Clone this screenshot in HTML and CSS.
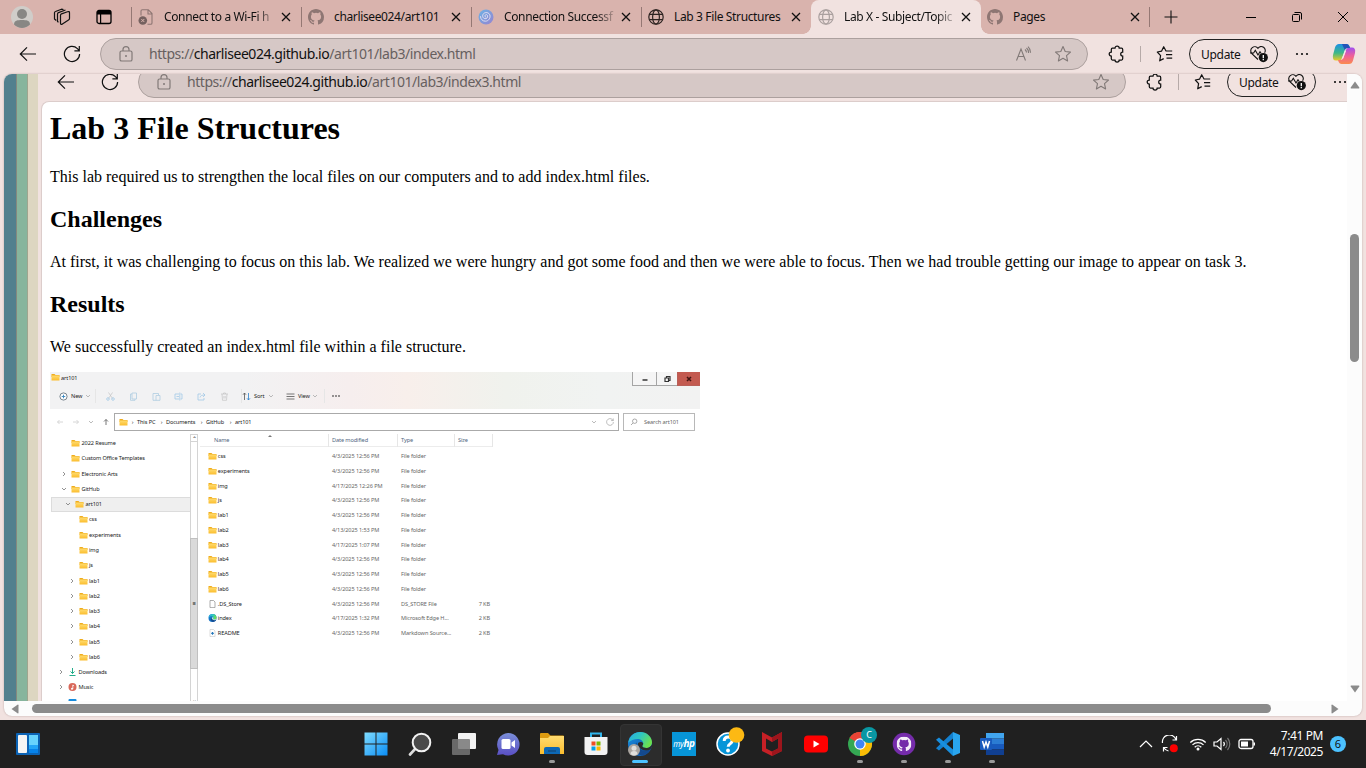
FILE: index.html
```html
<!DOCTYPE html>
<html lang="en">
<head>
<meta charset="utf-8">
<title>Lab X - Subject/Topic</title>
<link rel="stylesheet" href="styles.css">
</head>
<body>
<svg class="defs" aria-hidden="true">
  <defs>
    <linearGradient id="gFolder" x1="0" y1="0" x2="0" y2="1"><stop offset="0" stop-color="#ffdc70"/><stop offset="1" stop-color="#fbbd2e"/></linearGradient>
    <linearGradient id="gWin" x1="0" y1="0" x2="1" y2="1"><stop offset="0" stop-color="#7fdcff"/><stop offset="1" stop-color="#0a8df5"/></linearGradient>
    <linearGradient id="gEdgeA" x1="0" y1="0" x2="1" y2=".5"><stop offset="0" stop-color="#28a9e6"/><stop offset=".5" stop-color="#2fc7c0"/><stop offset="1" stop-color="#6be04f"/></linearGradient>
    <linearGradient id="gEdgeB" x1="0" y1="0" x2="1" y2="1"><stop offset="0" stop-color="#1a8fe0"/><stop offset="1" stop-color="#0c4fa5"/></linearGradient>
    <linearGradient id="gChat" x1="0" y1="0" x2="0" y2="1"><stop offset="0" stop-color="#7a8ed8"/><stop offset="1" stop-color="#5a4fc4"/></linearGradient>
    <linearGradient id="gCopA" x1="0" y1="0" x2="0" y2="1"><stop offset="0" stop-color="#1b8fe6"/><stop offset=".55" stop-color="#3fb886"/><stop offset="1" stop-color="#ecc928"/></linearGradient>
    <linearGradient id="gCopB" x1="0" y1="0" x2="0" y2="1"><stop offset="0" stop-color="#a04ff0"/><stop offset=".5" stop-color="#ee5f9a"/><stop offset="1" stop-color="#fb8c4e"/></linearGradient>
    <linearGradient id="gSpiral" x1="0" y1="0" x2="1" y2="1"><stop offset="0" stop-color="#6bb2e6"/><stop offset="1" stop-color="#9784d0"/></linearGradient>
  </defs>
  <symbol id="close" viewBox="0 0 10 10"><path d="M1 1l8 8M9 1l-8 8" fill="none" stroke="currentColor" stroke-width="1.3"/></symbol>
  <symbol id="globe" viewBox="0 0 16 16"><g fill="none" stroke="currentColor" stroke-width="1.2"><circle cx="8" cy="8" r="7.2"/><ellipse cx="8" cy="8" rx="3.4" ry="7.2"/><path d="M1.4 5.4h13.2M1.4 10.6h13.2"/></g></symbol>
  <symbol id="github" viewBox="0 0 16 16"><path fill="currentColor" fill-rule="evenodd" d="M8 0C3.58 0 0 3.58 0 8c0 3.54 2.29 6.53 5.47 7.59.4.07.55-.17.55-.38 0-.19-.01-.82-.01-1.49-2.01.37-2.53-.49-2.69-.94-.09-.23-.48-.94-.82-1.13-.28-.15-.68-.52-.01-.53.63-.01 1.08.58 1.23.82.72 1.21 1.87.87 2.33.66.07-.52.28-.87.51-1.07-1.78-.2-3.64-.89-3.64-3.95 0-.87.31-1.59.82-2.15-.08-.2-.36-1.02.08-2.12 0 0 .67-.21 2.2.82a7.4 7.4 0 0 1 4 0c1.53-1.04 2.2-.82 2.2-.82.44 1.1.16 1.92.08 2.12.51.56.82 1.27.82 2.15 0 3.07-1.87 3.75-3.65 3.95.29.25.54.73.54 1.48 0 1.07-.01 1.93-.01 2.2 0 .21.15.46.55.38A8.01 8.01 0 0 0 16 8c0-4.42-3.58-8-8-8z"/></symbol>
  <symbol id="back" viewBox="0 0 18 16"><path d="M17 8H1.5M8 1.3L1.3 8 8 14.7" fill="none" stroke="currentColor" stroke-width="1.2"/></symbol>
  <symbol id="reload" viewBox="0 0 18 18"><path d="M16.6 9A7.6 7.6 0 1 1 14.4 3.6L16.3 5.6M16.3 1v4.8h-4.9" fill="none" stroke="currentColor" stroke-width="1.2"/></symbol>
  <symbol id="lock" viewBox="0 0 14 16"><rect x="1" y="5" width="12" height="10" rx="1.6" fill="none" stroke="currentColor" stroke-width="1.2"/><path d="M4 5V3.6a3 3 0 0 1 6 0V5" fill="none" stroke="currentColor" stroke-width="1.2"/><circle cx="7" cy="10" r="1" fill="currentColor"/></symbol>
  <symbol id="star" viewBox="0 0 18 18"><path d="M9 1.6l2.2 4.9 5.3.6-4 3.6 1.1 5.2L9 13.3l-4.6 2.6 1.1-5.2-4-3.6 5.3-.6z" fill="none" stroke="currentColor" stroke-width="1.1" stroke-linejoin="round"/></symbol>
  <symbol id="puzzle" viewBox="0 0 18 18"><path d="M4.500 3.200H7A2.100 2.100 0 0 1 11.200 3.200H13.500Q14.700 3.200 14.700 4.400V7A2 2 0 0 0 14.700 11V13.800Q14.700 15 13.500 15H11.200A2.100 2.100 0 0 1 7 15H4.500Q3.300 15 3.300 13.800V11.200A2.100 2.100 0 0 1 3.300 7V4.400Q3.300 3.200 4.500 3.200z" fill="none" stroke="currentColor" stroke-width="1.250"/></symbol>
  <symbol id="favs" viewBox="0 0 18 18"><path d="M16.200 6H10L7.700 1.700 5.500 6.200 1.300 7l3.300 3.700-.9 5.100 4-2.200M10 9.700h6.200M10.500 13.200h5.700" fill="none" stroke="currentColor" stroke-width="1.200" stroke-linejoin="round"/></symbol>
  <symbol id="heart" viewBox="0 0 20 18"><path d="M9 14.500L2.600 8.300a3.900 3.900 0 0 1 6.400-5 3.900 3.900 0 0 1 6.600 4.500M1 8h3.600l1.700-2.700L9 10l2-3.200 1.200 1.700" fill="none" stroke="currentColor" stroke-width="1.100"/><circle cx="14.300" cy="12.600" r="4.600" fill="currentColor"/><path d="M14.300 10v3.200M14.300 14v1.200" stroke="#fff" stroke-width="1.300"/></symbol>
  <symbol id="dots" viewBox="0 0 16 4"><g fill="currentColor"><circle cx="3" cy="2" r="1.100"/><circle cx="8" cy="2" r="1.100"/><circle cx="13" cy="2" r="1.100"/></g></symbol>
  <symbol id="folder" viewBox="0 0 9 8"><path d="M.5 1h3l1 1h4v2h-8z" fill="#efac1c"/><path d="M.5 2.500h8v5h-8z" fill="url(#gFolder)"/></symbol>
  <symbol id="right" viewBox="0 0 6 6"><path d="M2 1l2 2-2 2" fill="none" stroke="currentColor" stroke-width=".8"/></symbol>
  <symbol id="down" viewBox="0 0 6 6"><path d="M1 2l2 2 2-2" fill="none" stroke="currentColor" stroke-width=".8"/></symbol>
  <symbol id="edge" viewBox="0 0 24 24"><circle cx="12" cy="12" r="12" fill="url(#gEdgeB)"/><path d="M.3 10.500C1.500 4 6.500 0 12.200 0 19 0 24 5 24 10.200c0 3.600-2.600 5.900-5.600 5.900-2.200 0-4.200-.9-4.200-2 0-.7 1-1 1-2.700 0-2-2-4.400-5.400-4.400-3.800 0-7.500 1.600-9.500 3.500z" fill="url(#gEdgeA)"/><path d="M8.500 10.500c-3.500 4-1 11.500 5.500 13 4-.6 7-3 8.300-6-5.800 2.800-12.800.5-13.800-7z" fill="#14498e"/><path d="M15.200 11.500c0 1.600-1 1.900-1 2.600 0 1.100 2 2 4.200 2 2.400 0 4.600-1.500 5.300-3.600l.3 2-1.700 3c-6 2.500-12-.5-12.500-5.500.2-2 4-3 5.400-.5z" fill="currentColor"/></symbol>
</svg>

<header class="tabstrip">
  <div class="tab-tools">
    <svg class="avatar" viewBox="0 0 22 22"><circle cx="11" cy="11" r="11" fill="#d0cdc9"/><circle cx="11" cy="8" r="5" fill="#888784"/><path d="M3 18.500c0-4 3.500-4.500 8-4.500s8 .5 8 4.500A11 11 0 0 1 3 18.500z" fill="#888784"/></svg>
    <svg class="tool" viewBox="0 0 18 18"><g fill="none" stroke="#111" stroke-width="1.200" stroke-linejoin="round"><path d="M7.500 7.300q0-1 1-1.400l6-2.200q2-.6 2 1v5.800q0 1-1 1.500L9 16.300q-1.500.3-1.500-1z"/><path d="M5.500 14.300l-1-.8V6q0-1 1-1.400L12.500 2"/><path d="M3.300 12.500L1.500 11V4.800q0-1 1-1.300L8.500 1.200l2 .5"/></g></svg>
    <svg class="tool" viewBox="0 0 18 18"><rect x="2" y="2.500" width="14" height="13" rx="2" fill="none" stroke="#000" stroke-width="1.300"/><path d="M2 4.500q0-2 2-2h10q2 0 2 2V6.500H2zM5 6h1.200v9.500H5z"/></svg>
  </div>
  <div class="tab">
    <svg class="fav grey" viewBox="0 0 16 16"><path d="M3 6.500V2q0-1.300 1.300-1.300h6L14 4.500V14q0 1.300-1.300 1.300H9.500M10 1v4h4" fill="none" stroke="currentColor" stroke-width="1.100"/><circle cx="4.800" cy="11.500" r="4.300" fill="#75615f"/><path d="M3.300 10l3 3m0-3l-3 3" stroke="#d9b3ad"/></svg>
    <span class="title fade">Connect to a Wi-Fi h</span><svg class="x"><use href="#close"/></svg>
  </div>
  <div class="tab"><svg class="fav grey"><use href="#github"/></svg><span class="title">charlisee024/art101</span><svg class="x"><use href="#close"/></svg></div>
  <div class="tab">
    <svg class="fav" viewBox="0 0 16 16"><circle cx="8" cy="8" r="7.500" fill="url(#gSpiral)"/><path d="M8 8.200a1.300 1.300 0 1 1 1.500-1.700c.6 2-1 3.500-2.500 3.200C4.500 9.300 4 6.500 5.500 4.700c2-2 5.500-1.200 6.400 1.300.8 3-1.200 6-4.400 6.200-3 0-5-2-5-5" fill="none" stroke="#e2dff2"/></svg>
    <span class="title fade">Connection Successf</span><svg class="x"><use href="#close"/></svg>
  </div>
  <div class="tab"><svg class="fav dark"><use href="#globe"/></svg><span class="title">Lab 3 File Structures</span><svg class="x"><use href="#close"/></svg></div>
  <div class="tab active"><svg class="fav light"><use href="#globe"/></svg><span class="title fade">Lab X - Subject/Topic</span><svg class="x"><use href="#close"/></svg></div>
  <div class="tab last"><svg class="fav grey"><use href="#github"/></svg><span class="title">Pages</span><svg class="x"><use href="#close"/></svg></div>
  <svg class="plus" viewBox="0 0 14 14"><path d="M7 .5v13M.5 7h13" stroke="#111" stroke-width="1.100"/></svg>
  <div class="window-controls">
    <svg viewBox="0 0 12 12"><path d="M1 6.500h10" stroke="#000"/></svg>
    <svg viewBox="0 0 12 12"><g fill="none" stroke="#000"><rect x="1.500" y="3.500" width="7" height="7" rx="1"/><path d="M3.500 1.500H9q1.500 0 1.500 1.500v5.500"/></g></svg>
    <svg viewBox="0 0 12 12"><path d="M1 1l10 10M11 1L1 11" stroke="#000"/></svg>
  </div>
</header>

<div class="toolbar">
  <svg class="nav-back"><use href="#back"/></svg>
  <svg class="nav-reload"><use href="#reload"/></svg>
  <div class="address">
    <svg class="lock"><use href="#lock"/></svg>
    <span class="url">https://<b>charlisee024.github.io</b>/art101/lab3/index.html</span>
    <svg class="read" viewBox="0 0 18 16"><path d="M1.500 14.500L6 3l4.500 11.500M3.200 10.500h5.600M10 3.500a4 4 0 0 1 1.500 3M11.500 2a6 6 0 0 1 2 5M13 .7a8 8 0 0 1 2.500 6" fill="none" stroke="currentColor" stroke-width="1.100"/></svg>
    <svg class="star"><use href="#star"/></svg>
  </div>
  <svg class="puzzle"><use href="#puzzle"/></svg>
  <span class="divider"></span>
  <svg class="favs"><use href="#favs"/></svg>
  <div class="update"><span>Update</span><svg><use href="#heart"/></svg></div>
  <svg class="dots"><use href="#dots"/></svg>
  <svg class="copilot" viewBox="0 0 24 22"><path d="M7 1h7.500q2 0 2.800 2l.7 2h-2.500q-2 0-2.700 2L10 15q-.8 2.500-3 2.500H4Q0 17.500 1 12l2-7.500Q4 1 7 1z" fill="url(#gCopA)"/><path d="M17 21H9.500q-2 0-2.800-2L6 17h2.500q2 0 2.700-2L14 7q.8-2.500 3-2.500h3q4 0 3 5.500l-2 7.500Q20 21 17 21z" fill="url(#gCopB)"/><path d="M10 1h4.500q2 0 2.800 2l.7 2h-2.500q-2 0-2.700 2z" fill="#2454b8"/><path d="M12.800 8L10 15.500h1.200L14 8z" fill="#f7e9e8"/></svg>
</div>

<main class="frame">
  <div class="frame-row">
    <div class="stripes"><i></i><i></i><i></i></div>
    <section class="content">
      <div class="capture-bar">
        <div class="toolbar inner">
          <svg class="nav-back"><use href="#back"/></svg>
          <svg class="nav-reload"><use href="#reload"/></svg>
          <div class="address">
            <svg class="lock"><use href="#lock"/></svg>
            <span class="url">https://<b>charlisee024.github.io</b>/art101/lab3/index3.html</span>
            <svg class="star"><use href="#star"/></svg>
          </div>
          <svg class="puzzle"><use href="#puzzle"/></svg>
          <span class="divider"></span>
          <svg class="favs"><use href="#favs"/></svg>
          <div class="update"><span>Update</span><svg><use href="#heart"/></svg></div>
          <svg class="dots"><use href="#dots"/></svg>
        </div>
      </div>
      <article class="doc">
        <h1>Lab 3 File Structures</h1>
        <p>This lab required us to strengthen the local files on our computers and to add index.html files.</p>
        <h2>Challenges</h2>
        <p>At first, it was challenging to focus on this lab. We realized we were hungry and got some food and then we were able to focus. Then we had trouble getting our image to appear on task 3.</p>
        <h2>Results</h2>
        <p>We successfully created an index.html file within a file structure.</p>
        <div class="explorer">
          <div class="ex-top">
            <div class="ex-title"><svg class="fo"><use href="#folder"/></svg><span>art101</span><div class="ex-win"><i><svg viewBox="0 0 8 8"><path d="M1.500 5h5" stroke="#333" stroke-width="1.500"/></svg></i><i><svg viewBox="0 0 8 8"><path d="M2 3h3.500v3.500H2zM3.500 3V1.500H7v4H5.500" fill="none" stroke="#333" stroke-width="1.200"/></svg></i><i class="red"><svg viewBox="0 0 8 8"><path d="M2 2l4 4M6 2L2 6" stroke="#431512" stroke-width="1.600"/></svg></i></div></div>
            <div class="ex-cmd">
              <svg class="ci" viewBox="0 0 9 9"><circle cx="4.500" cy="4.500" r="3.600" fill="#fff" stroke="#596874" stroke-width=".8"/><path d="M2.700 4.500h3.600M4.500 2.700v3.600" stroke="#3685be" stroke-width=".9"/></svg><span class="new">New</span><svg class="ch"><use href="#down"/></svg><i class="sep"></i>
              <div class="faded">
                <svg viewBox="0 0 9 9"><path d="M2.500.5l4 6M6.500.5l-4 6" stroke="#aaa" stroke-width=".7"/><g fill="none" stroke="#78b4df" stroke-width=".8"><circle cx="2" cy="7" r="1.300"/><circle cx="7" cy="7" r="1.300"/></g></svg>
                <svg viewBox="0 0 9 9"><path d="M3 1h4.500v6H3zM3 2H1.500v6.300H6V7" fill="none" stroke="#8bb9d8" stroke-width=".8"/></svg>
                <svg viewBox="0 0 9 9"><path d="M1 1.500h5.500V3M1 1.500v6.800h3M4 3.500h4v4.800H4z" fill="none" stroke="#8bb9d8" stroke-width=".8"/></svg>
                <svg viewBox="0 0 9 9"><path d="M5 2H1v5h4M6.500 2H8v5H6.500M5.800.5v8M2.500 4.500H5" fill="none" stroke="#78b4df" stroke-width=".8"/></svg>
                <svg viewBox="0 0 9 9"><path d="M4 2H1v6h6V6M3 5.500C3.500 3.500 5 3 8 3M6 1l2 2-2 2" fill="none" stroke="#78b4df" stroke-width=".8"/></svg>
                <svg viewBox="0 0 9 9"><path d="M1 2h7M3.500 2V1h2v1M2 2l.5 6.300h4L7 2M3.900 4v2.500M5.200 4v2.500" fill="none" stroke="#aaa" stroke-width=".7"/></svg>
              </div><i class="sep"></i>
              <svg class="ci" viewBox="0 0 9 9"><path d="M2.500 8V1M1 2.700L2.500 1 4 2.700" fill="none" stroke="#555" stroke-width=".8"/><path d="M6.500 1v7M5 6.300L6.500 8 8 6.300" fill="none" stroke="#2c82cc" stroke-width=".8"/></svg><span class="sort">Sort</span><svg class="ch"><use href="#down"/></svg>
              <svg class="ci view" viewBox="0 0 9 9"><path d="M.5 2h8M.5 4.500h8M.5 7h8" stroke="#555" stroke-width=".8"/></svg><span class="vw">View</span><svg class="ch"><use href="#down"/></svg><i class="sep end"></i><svg class="more" viewBox="0 0 10 4"><path d="M1 2h2M4 2h2M7 2h2" stroke="#333" stroke-width="1.200"/></svg>
            </div>
          </div>
          <div class="ex-nav">
            <div class="arrows">
              <svg viewBox="0 0 8 8"><path d="M7 4H1.500M3.500 2l-2 2 2 2" fill="none" stroke="#ccc" stroke-width=".8"/></svg><svg viewBox="0 0 8 8"><path d="M1 4h5.500M4.500 2l2 2-2 2" fill="none" stroke="#ccc" stroke-width=".8"/></svg><svg class="ch"><use href="#down"/></svg><svg viewBox="0 0 8 8"><path d="M4 7V1.500M2 3.500l2-2 2 2" fill="none" stroke="#666" stroke-width=".9"/></svg>
            </div>
            <div class="path"><svg class="fo"><use href="#folder"/></svg><em>›</em><span class="c1">This PC</span><em>›</em><span class="c2">Documents</span><em>›</em><span class="c3">GitHub</span><em>›</em><span>art101</span><svg class="ch endch"><use href="#down"/></svg><svg class="rl"><use href="#reload"/></svg></div>
            <div class="search"><svg viewBox="0 0 8 8"><circle cx="4.700" cy="3.200" r="2.200" fill="none" stroke="#888" stroke-width=".7"/><path d="M3 5L1 7" stroke="#888" stroke-width=".7"/></svg><span>Search art101</span></div>
          </div>
          <div class="ex-body">
            <div class="tree">
              <div class="n l1"><s></s><svg class="fo"><use href="#folder"/></svg>2022 Resume</div>
              <div class="n l1"><s></s><svg class="fo"><use href="#folder"/></svg>Custom Office Templates</div>
              <div class="n l1"><svg class="ar"><use href="#right"/></svg><svg class="fo"><use href="#folder"/></svg>Electronic Arts</div>
              <div class="n l1"><svg class="ar"><use href="#down"/></svg><svg class="fo"><use href="#folder"/></svg>GitHub</div>
              <div class="n l2 sel"><svg class="ar"><use href="#down"/></svg><svg class="fo"><use href="#folder"/></svg>art101</div>
              <div class="n l3"><s></s><svg class="fo"><use href="#folder"/></svg>css</div>
              <div class="n l3"><s></s><svg class="fo"><use href="#folder"/></svg>experiments</div>
              <div class="n l3"><s></s><svg class="fo"><use href="#folder"/></svg>img</div>
              <div class="n l3"><s></s><svg class="fo"><use href="#folder"/></svg>js</div>
              <div class="n l3"><svg class="ar"><use href="#right"/></svg><svg class="fo"><use href="#folder"/></svg>lab1</div>
              <div class="n l3"><svg class="ar"><use href="#right"/></svg><svg class="fo"><use href="#folder"/></svg>lab2</div>
              <div class="n l3"><svg class="ar"><use href="#right"/></svg><svg class="fo"><use href="#folder"/></svg>lab3</div>
              <div class="n l3"><svg class="ar"><use href="#right"/></svg><svg class="fo"><use href="#folder"/></svg>lab4</div>
              <div class="n l3"><svg class="ar"><use href="#right"/></svg><svg class="fo"><use href="#folder"/></svg>lab5</div>
              <div class="n l3"><svg class="ar"><use href="#right"/></svg><svg class="fo"><use href="#folder"/></svg>lab6</div>
              <div class="n l0"><svg class="ar"><use href="#right"/></svg><svg class="fo" viewBox="0 0 9 8"><path d="M4.500 0v5.500M2.500 3.500l2 2 2-2M1.500 7.500h6" fill="none" stroke="#23ad8a" stroke-width="1"/></svg>Downloads</div>
              <div class="n l0"><svg class="ar"><use href="#right"/></svg><svg class="fo" viewBox="0 0 9 8"><circle cx="4.500" cy="4" r="4" fill="#d9685a"/><path d="M4.800 6V2l1.300.8" fill="none" stroke="#fff" stroke-width=".8"/><circle cx="4" cy="5.700" r="1" fill="#fff"/></svg>Music</div>
              <div class="n l0"><svg class="ar"><use href="#right"/></svg><svg class="fo" viewBox="0 0 9 8"><rect x=".5" y="0" width="8" height="7" rx="1" fill="#168bdd"/></svg>Pictures</div>
            </div>
            <div class="ex-scroll"><b>⌃</b><i>≡</i><b>⌄</b></div>
            <div class="list">
              <div class="row head"><span>Name</span><span>Date modified</span><span>Type</span><span>Size</span><u></u></div>
              <div class="row"><span><svg class="fo"><use href="#folder"/></svg>css</span><span>4/3/2025 12:56 PM</span><span>File folder</span><span></span></div>
              <div class="row"><span><svg class="fo"><use href="#folder"/></svg>experiments</span><span>4/3/2025 12:56 PM</span><span>File folder</span><span></span></div>
              <div class="row"><span><svg class="fo"><use href="#folder"/></svg>img</span><span>4/17/2025 12:26 PM</span><span>File folder</span><span></span></div>
              <div class="row"><span><svg class="fo"><use href="#folder"/></svg>js</span><span>4/3/2025 12:56 PM</span><span>File folder</span><span></span></div>
              <div class="row"><span><svg class="fo"><use href="#folder"/></svg>lab1</span><span>4/3/2025 12:56 PM</span><span>File folder</span><span></span></div>
              <div class="row"><span><svg class="fo"><use href="#folder"/></svg>lab2</span><span>4/13/2025 1:53 PM</span><span>File folder</span><span></span></div>
              <div class="row"><span><svg class="fo"><use href="#folder"/></svg>lab3</span><span>4/17/2025 1:07 PM</span><span>File folder</span><span></span></div>
              <div class="row"><span><svg class="fo"><use href="#folder"/></svg>lab4</span><span>4/3/2025 12:56 PM</span><span>File folder</span><span></span></div>
              <div class="row"><span><svg class="fo"><use href="#folder"/></svg>lab5</span><span>4/3/2025 12:56 PM</span><span>File folder</span><span></span></div>
              <div class="row"><span><svg class="fo"><use href="#folder"/></svg>lab6</span><span>4/3/2025 12:56 PM</span><span>File folder</span><span></span></div>
              <div class="row"><span><svg class="fo" viewBox="0 0 9 8"><path d="M2 .5h3.500L7 2v5.600H2z" fill="#fff" stroke="#777" stroke-width=".6"/></svg>.DS_Store</span><span>4/3/2025 12:56 PM</span><span>DS_STORE File</span><span>7 KB</span></div>
              <div class="row"><span><svg class="fo mini-edge"><use href="#edge"/></svg>index</span><span>4/17/2025 1:32 PM</span><span>Microsoft Edge H...</span><span>2 KB</span></div>
              <div class="row"><span><svg class="fo" viewBox="0 0 9 8"><path d="M2 .5h3.500L7 2v5.600H2z" fill="#fff" stroke="#bbb" stroke-width=".5"/><path d="M4.500 3v2.800M3.200 4.400h2.600" stroke="#2377bb" stroke-width="1.100"/></svg>README</span><span>4/3/2025 12:56 PM</span><span>Markdown Source...</span><span>2 KB</span></div>
            </div>
          </div>
        </div>
      </article>
    </section>
    <div class="vscroll"><svg viewBox="0 0 10 8"><path d="M5 .5l4.300 6q.4 1-.6 1H1.300q-1 0-.6-1z" fill="#8b8b8b"/></svg><i></i><svg viewBox="0 0 10 8"><path d="M5 7.500l4.300-6q.4-1-.6-1H1.300q-1 0-.6 1z" fill="#8b8b8b"/></svg></div>
  </div>
  <div class="hscroll"><svg viewBox="0 0 8 10"><path d="M.5 5l6-4.300q1-.4 1 .6v7.400q0 1-1 .6z" fill="#8b8b8b"/></svg><i></i><svg viewBox="0 0 8 10"><path d="M7.500 5l-6-4.300q-1-.4-1 .6v7.400q0 1 1 .6z" fill="#8b8b8b"/></svg></div>
</main>

<footer class="taskbar">
  <svg class="widgets" viewBox="0 0 24 22"><rect width="24" height="22" rx="1" fill="#0b63b5"/><rect x="2" y="2" width="9" height="18" rx="1" fill="#f4f4f4"/><path d="M13 2h9v10h-9z" fill="#67d3fd"/><path d="M13 12h9v4h-9z" fill="#22a5f7"/><path d="M13 16h9v4h-9z" fill="#0683ea"/></svg>
  <div class="apps">
    <div class="app"><svg viewBox="0 0 24 24"><path d="M.5.500h11v11h-11zM12.500.500h11v11h-11zM.5 12.500h11v11h-11zM12.500 12.500h11v11h-11z" fill="url(#gWin)"/></svg></div>
    <div class="app"><svg viewBox="0 0 24 24"><path d="M7.500 16.500L2 22.500" stroke="#ddd" stroke-width="2.600" stroke-linecap="round"/><circle cx="13.500" cy="10.500" r="8.800" fill="#4a4a4a" stroke="#f2f2f2" stroke-width="2"/></svg></div>
    <div class="app"><svg viewBox="0 0 24 24"><rect x="6" y="1" width="18" height="16" rx="1" fill="#f2f2f2"/><rect y="7" width="18" height="16" rx="1" fill="#777" fill-opacity=".85"/></svg></div>
    <div class="app"><svg viewBox="0 0 24 24"><path d="M12 1a11.300 11.300 0 1 1-5 21.300L1 23l1.500-5A11.500 11.500 0 0 1 12 1z" fill="url(#gChat)"/><rect x="5.500" y="7" width="9" height="10" rx="1.500" fill="#fff"/><path d="M15.500 10.500L19 8v8l-3.500-2.500z" fill="#fff"/></svg></div>
    <div class="app"><svg viewBox="0 0 24 24"><path d="M0 2q0-1 1-1h7l2.500 2.500H23q1 0 1 1V9H0z" fill="#dd9b10"/><path d="M0 6h8l2-2h14v18H0z" fill="url(#gFolder)"/><path d="M4 22v-5q0-2 2-2h12q2 0 2 2v5z" fill="#0d68b5"/><path d="M8 19h8" stroke="#124c82" stroke-width="1.500"/></svg><i></i></div>
    <div class="app"><svg viewBox="0 0 24 24"><path d="M7 5V1.500h10V5" fill="none" stroke="#31b5ec" stroke-width="2"/><path d="M.5 5h23v15q0 3-3 3h-17q-3 0-3-3z" fill="#f2f2f2"/><path d="M7.500 9.500h4v4h-4z" fill="#f04e23"/><path d="M12.500 9.500h4v4h-4z" fill="#7db900"/><path d="M7.500 14.500h4v4h-4z" fill="#069fe6"/><path d="M12.500 14.500h4v4h-4z" fill="#fdb900"/></svg></div>
    <div class="app current"><svg viewBox="0 0 24 24"><use href="#edge"/><circle cx="6" cy="18" r="6" fill="#aaa5a0"/><circle cx="6" cy="16.300" r="2.500" fill="#e0dedb"/><path d="M2.500 22q0-3 3.500-3t3.500 3q-3.500 3-7 0z" fill="#e0dedb"/></svg><i></i></div>
    <div class="app"><div class="hp">my<b>hp</b></div></div>
    <div class="app help"><svg viewBox="0 0 28 28"><circle cx="14" cy="15" r="11" fill="#0795d8" stroke="#fff" stroke-width="1.500"/><path d="M10.200 12q0-4 4-4t4 3.500q0 2-2 3.200t-2 3" fill="none" stroke="#fff" stroke-width="3"/><circle cx="14" cy="21.500" r="1.900" fill="#fff"/><circle cx="22.500" cy="6" r="7.800" fill="#fdb913"/></svg></div>
    <div class="app"><svg viewBox="0 0 24 24"><path d="M2 0l10 5.500L22 0v19l-10 5-10-5zM6 6.500v10l6 3 6-3v-10l-6 3.500z" fill="#c62026" fill-rule="evenodd"/><path d="M12 5.500L22 0v19l-10 5v-4.500l6-3v-10L12 10z" fill="#9c151c"/></svg></div>
    <div class="app"><svg viewBox="0 0 24 24"><rect y="3.500" width="24" height="17" rx="4" fill="#f00"/><path d="M9.500 8.500v7l6-3.500z" fill="#fff"/></svg></div>
    <div class="app chrome"><svg viewBox="0 0 30 30"><circle cx="15" cy="16" r="12" fill="#34a853"/><path d="M15 16L4.600 10a12 12 0 0 1 20.800 0z" fill="#ea4335"/><path d="M15 16l10.400-6A12 12 0 0 1 15 28z" fill="#fbbc05"/><path d="M4.600 10A12 12 0 0 1 25.400 10H15z" fill="#ea4335"/><circle cx="15" cy="16" r="5.800" fill="#fff"/><circle cx="15" cy="16" r="4.500" fill="#4285f4"/></svg><b>C</b><i></i></div>
    <div class="app"><svg viewBox="0 0 24 24"><circle cx="12" cy="12" r="11.300" fill="#752caa"/><svg x="4.500" y="4.500" width="15" height="15" color="#f4eef8"><use href="#github"/></svg></svg><i></i></div>
    <div class="app"><svg viewBox="0 0 24 24"><path d="M17 0l7 3v18l-7 3z" fill="#29a5ee"/><path d="M17 0v6.500L3 18.500l-3-2.300z" fill="#1380cf"/><path d="M17 24v-6.500L3 5.500 0 7.800z" fill="#188fdf"/></svg><i></i></div>
    <div class="app"><svg viewBox="0 0 24 24"><path d="M6 1h18v5.500H6z" fill="#41a5ee"/><path d="M6 6.500h18V12H6z" fill="#2b7cd3"/><path d="M6 12h18v5.500H6z" fill="#185abd"/><path d="M6 17.500h18V23H6z" fill="#103f91"/><rect y="6" width="12" height="12" rx="1" fill="#185abd"/><path d="M2.500 9l1.700 6L6 10l1.800 5 1.700-6" fill="none" stroke="#fff" stroke-width="1.500"/></svg><i></i></div>
  </div>
  <div class="tray">
    <svg class="t1" viewBox="0 0 14 8"><path d="M1 7l6-6 6 6" fill="none" stroke="#fff" stroke-width="1.200"/></svg>
    <svg class="t2" viewBox="0 0 18 18"><path d="M1.500 8A7 7 0 0 1 15 4.500M15.500 1v4h-4M6.500 12.500h-4v4M3 13a7 7 0 0 0 4.500 3" fill="none" stroke="#fff" stroke-width="1.200"/><circle cx="12.800" cy="13.300" r="4" fill="#f00"/></svg>
    <svg class="t3" viewBox="0 0 18 14"><g fill="none" stroke="#fff" stroke-width="1.300"><path d="M1.300 5.500a11 11 0 0 1 15.400 0M3.500 7.900a7.800 7.800 0 0 1 11 0M5.700 10.300a4.700 4.700 0 0 1 6.600 0"/></g><circle cx="9" cy="12" r="1.500" fill="#fff"/></svg>
    <svg class="t4" viewBox="0 0 18 14"><path d="M1 5h3l4-3.500v11L4 9H1z" fill="none" stroke="#fff" stroke-width="1.200"/><path d="M10.500 5a3 3 0 0 1 0 4" fill="none" stroke="#fff" stroke-width="1.200"/><path d="M12.500 3a6 6 0 0 1 0 8M14.500 1a9 9 0 0 1 0 12" fill="none" stroke="#777" stroke-width="1.200"/></svg>
    <svg class="t5" viewBox="0 0 18 12"><rect x="1" y="1.500" width="14" height="9" rx="2" fill="none" stroke="#fff" stroke-width="1.300"/><path d="M3 3.500h7v5H3zM15.500 4.500h1.500v3h-1.500z" fill="#fff"/></svg>
    <div class="clock"><span>7:41 PM</span><span>4/17/2025</span></div>
    <div class="count">6</div>
  </div>
</footer>
</body>
</html>
```

FILE: styles.css
```css
* { box-sizing: border-box; }
html, body { margin: 0; width: 1366px; height: 768px; overflow: hidden; }
body { background: #f1e2e0; font-family: "Noto Sans", "Open Sans", sans-serif; display: flex; flex-direction: column; color: #111; }
svg { display: block; flex: none; }
.defs { position: absolute; width: 0; height: 0; }

/* tab strip */
.tabstrip { height: 34px; flex: none; background: #d9b3ad; display: flex; align-items: center; }
.tab-tools { width: 131px; display: flex; align-items: center; padding-left: 11px; }
.avatar { width: 22px; height: 22px; margin-right: 20px; }
.tool { width: 18px; height: 18px; margin-right: 24px; }
.tab { width: 170px; height: 34px; flex: none; display: flex; align-items: center; padding-left: 7px; position: relative; }
.tab::before { content: ""; position: absolute; left: 0; top: 7px; width: 1px; height: 20px; background: #957874; }
.fav { width: 16px; height: 16px; margin-right: 10px; }
.grey { color: #8e7673; }
.dark { color: #2d2321; }
.light { color: #aaa09f; }
.title { width: 113px; font-size: 12px; letter-spacing: -.36px; line-height: 18px; white-space: nowrap; margin-right: 4px; }
.fade { -webkit-mask-image: linear-gradient(90deg, #000 92px, transparent 114px); mask-image: linear-gradient(90deg, #000 92px, transparent 114px); }
.x { width: 10px; height: 10px; color: #111; }
.active { background: #f1e2e0; border-radius: 8px 8px 0 0; }
.active::before { left: -8px; top: 26px; width: 8px; height: 8px; background: radial-gradient(circle at 0 0, #d9b3ad 7.5px, #f1e2e0 8px); }
.active::after { content: ""; position: absolute; right: -8px; top: 26px; width: 8px; height: 8px; background: radial-gradient(circle at 100% 0, #d9b3ad 7.5px, #f1e2e0 8px); }
.last { padding-left: 6px; }
.last::before { left: 168px; }
.plus { width: 14px; height: 14px; margin-left: 13px; }
.window-controls { margin-left: auto; display: flex; gap: 34px; padding-right: 17px; }
.window-controls svg { width: 12px; height: 12px; }

/* toolbar */
.toolbar { height: 40px; flex: none; display: flex; align-items: center; }
.nav-back { width: 18px; height: 16px; margin-left: 19px; }
.nav-reload { width: 18px; height: 18px; margin-left: 26px; }
.address { width: 988px; height: 32px; margin-left: 19px; flex: none; border: 1px solid #aca09e; border-radius: 16px; background: #d6c8c6; display: flex; align-items: center; color: #817977; }
.lock { width: 14px; height: 16px; margin-left: 18px; }
.url { margin-left: 16px; margin-right: auto; margin-top: -1px; font-size: 14px; letter-spacing: -.45px; color: #67605f; white-space: nowrap; }
.url b { color: #111; font-weight: 400; }
.read { width: 18px; height: 16px; margin-right: 21px; }
.star { width: 18px; height: 18px; margin-right: 15px; }
.puzzle { width: 18px; height: 18px; margin-left: 20px; }
.divider { width: 1px; height: 16px; background: #b6aaa8; margin-left: 14px; flex: none; }
.favs { width: 18px; height: 18px; margin-left: 15px; }
.update { width: 89px; height: 30px; margin-left: 15px; border: 1.3px solid #222; border-radius: 15px; display: flex; align-items: center; padding-left: 11px; flex: none; font-size: 12px; letter-spacing: -.3px; }
.update span { width: 48px; }
.update svg { width: 20px; height: 18px; }
.dots { width: 16px; height: 4px; margin-left: 16px; }
.copilot { width: 24px; height: 22px; margin-left: 22px; }

/* page frame */
.frame { width: 1358px; height: 642px; flex: none; margin-left: 4px; border-radius: 8px; overflow: hidden; background: #fcfcfc; box-shadow: 0 0 2px #b9a3a1; }
.frame-row { display: flex; height: 627px; }
.stripes { display: flex; width: 34px; flex: none; }
.stripes i { width: 12px; background: #52808e; }
.stripes i + i { width: 11px; background: #87b59d; border-left: 1px solid #85897f; }
.stripes i:last-child { background: #ddd6c1; border-color: #9fa58f; }
.content { width: 1309px; overflow: hidden; background: #f1e2e0; }
.capture-bar { height: 27px; overflow: hidden; }
.inner { margin-top: -12px; }
.doc { margin-left: 3px; height: 600px; border: 1px solid #dccdcb; border-right: 0; border-bottom: 0; border-top-left-radius: 8px; background: #fff; padding: 8px; font-family: "Liberation Serif", "Times New Roman", serif; color: #000; overflow: hidden; }
.doc h1 { font-size: 32px; line-height: 37px; margin: 0 0 21px; }
.doc h2 { font-size: 24px; line-height: 27px; margin: 20px 0; }
.doc p { font-size: 16px; line-height: 18px; margin: 0; }
.doc p:last-of-type { margin-bottom: 16px; }
.vscroll { width: 15px; display: flex; flex-direction: column; align-items: center; background: #fcfcfc; padding: 7px 0 8px; }
.vscroll svg { width: 10px; height: 8px; }
.vscroll i { width: 9px; height: 128px; border-radius: 5px; background: #8b8b8b; margin: 145px 0 auto; }
.hscroll { height: 15px; display: flex; align-items: center; padding-left: 7px; }
.hscroll svg { width: 8px; height: 10px; }
.hscroll i { width: 1239px; height: 9px; border-radius: 5px; background: #8b8b8b; margin: 0 60px 0 13px; }

/* file explorer */
.explorer { width: 650px; height: 329px; overflow: hidden; font-family: "Noto Sans", sans-serif; font-size: 5.6px; letter-spacing: -.1px; color: #222; background: #fff; }
.fo { width: 9px; height: 8px; }
.mini-edge { color: #bff0d8; }
.ch { width: 6px; height: 6px; color: #aaa; }
.ex-top { height: 37px; background: linear-gradient(90deg, #f2f2f3 30%, #f6eeee 46%, #f8efeb 55%, #f0f2ed 70%, #f1f3f2 85%, #f2f2f2); }
.ex-title { height: 14px; display: flex; padding-left: 1px; }
.ex-title .fo { margin: 1px 1px 0 0; }
.ex-title span { line-height: 12px; }
.ex-win { display: flex; margin-left: auto; }
.ex-win i { width: 21px; height: 14px; border: 1px solid #a5a5a5; border-top: 0; border-right: 0; display: flex; align-items: center; justify-content: center; background: #f5f5f5; }
.ex-win i:first-child { width: 24px; }
.ex-win svg { width: 8px; height: 8px; }
.ex-win .red { width: 23px; background: #c35a50; border-color: #b95f58; }
.ex-cmd { height: 20px; display: flex; align-items: center; padding-left: 9px; }
.ci { width: 9px; height: 9px; }
.new { width: 14px; margin-left: 3px; }
.sep { width: 1px; height: 14px; background: #e6e6e6; margin-left: 4px; }
.faded { display: flex; gap: 13.8px; margin: 0 8px 0 10px; opacity: .65; }
.faded svg { width: 9px; height: 9px; }
.sort { width: 14px; margin-left: 3px; }
.view { margin-left: 12px; }
.vw { width: 14px; margin-left: 3px; }
.sep.end { margin-left: 6px; }
.more { width: 10px; height: 4px; margin-left: 6px; }
.ex-nav { height: 25px; display: flex; align-items: center; }
.arrows { width: 64px; display: flex; align-items: center; gap: 8px; padding-left: 6px; }
.arrows svg { width: 8px; height: 8px; }
.arrows .ch { width: 6px; }
.path { width: 505px; height: 18px; border: 1px solid #aaa; display: flex; align-items: center; padding-left: 4px; }
.path em { font-style: normal; width: 9px; text-align: center; flex: none; }
.c1 { width: 20px; }
.c2 { width: 31px; }
.c3 { width: 20px; }
.endch { margin-left: auto; }
.rl { width: 8px; height: 8px; margin: 0 4px 0 9px; color: #888; }
.search { width: 72px; height: 18px; border: 1px solid #b8b8b8; margin-left: 4px; display: flex; align-items: center; padding-left: 6px; color: #666; }
.search svg { width: 8px; height: 8px; margin-right: 6px; }
.ex-body { display: flex; height: 267px; }
.tree { width: 140px; flex: none; padding-top: 1.5px; }
.n { height: 15.27px; display: flex; align-items: center; white-space: nowrap; }
.n .fo { margin-right: 1.5px; }
.n .ar, .n s { width: 6px; height: 6px; margin-right: 4px; color: #777; flex: none; }
.l0 { padding-left: 8px; }
.l0 .ar { margin-right: 4px; }
.l1 { padding-left: 11px; }
.l2 { padding-left: 15px; }
.l3 { padding-left: 18.5px; }
.sel { background: #efefef; border: 1px solid #dcdcdc; border-right: 0; margin-left: 1px; padding-left: 13px; }
.ex-scroll { width: 8px; border: 1px solid #d4d4d4; border-bottom: 0; display: flex; flex-direction: column; align-items: center; }
.ex-scroll b { height: 7px; line-height: 9px; width: 6px; text-align: center; font-weight: 400; }
.ex-scroll b:first-child { border-bottom: 1px solid #d4d4d4; margin-bottom: 96px; }
.ex-scroll i { width: 8px; height: 131px; background: #dadada; border: 1px solid #c0c0c0; margin-bottom: 27px; font-style: normal; font-weight: 700; text-align: center; line-height: 129px; }
.list { width: 293px; margin-left: 2px; flex: none; }
.row { height: 14.78px; display: grid; grid-template-columns: 129px 69px 57px 38px; align-items: center; color: #666; white-space: nowrap; }
.row span { padding-left: 3px; }
.row span:first-child { display: flex; align-items: center; padding-left: 8px; color: #222; }
.row .fo { margin-right: .8px; }
.row span:last-child { text-align: right; padding-right: 3px; }
.head { height: 13px; margin-bottom: 1.7px; border-bottom: 1px solid #ececec; position: relative; color: #4f6580; }
.head span { border-right: 1px solid #e6e6e6; line-height: 13px; }
.head span:first-child { color: #4f6580; padding-left: 14px; }
.head span:nth-child(4) { text-align: left; }
.head u { position: absolute; left: 68px; top: 1px; border: 2px solid transparent; border-top: 0; border-bottom-color: #777; }

/* taskbar */
.taskbar { height: 48px; flex: none; margin-top: 4px; background: #202020; display: flex; align-items: center; color: #fff; }
.widgets { width: 24px; height: 22px; margin-left: 16px; }
.apps { display: flex; margin-left: 314px; }
.app { width: 44px; height: 48px; display: flex; align-items: center; justify-content: center; position: relative; }
.app > svg { width: 24px; height: 24px; }
.app > i { position: absolute; left: 19px; top: 40px; width: 6px; height: 3px; border-radius: 2px; background: #999; }
.current::before { content: ""; position: absolute; left: 2px; top: 4px; width: 40px; height: 40px; border-radius: 4px; background: #2c2c2c; border: 1px solid #343434; }
.current > svg { position: relative; color: #2c2c2c; }
.current > i { left: 14px; width: 16px; background: #4cc2ff; }
.hp { width: 24px; height: 24px; background: #0795d8; font-size: 8px; font-style: italic; line-height: 23px; text-align: center; letter-spacing: -.3px; }
.hp b { font-size: 10px; }
.help > svg { width: 28px; height: 28px; overflow: visible; margin: -2px 0 0; }
.chrome > svg { width: 30px; height: 30px; margin-top: -2px; }
.chrome > b { position: absolute; left: 23px; top: 7px; width: 16px; height: 16px; border-radius: 8px; background: #0997a3; font-size: 9px; font-weight: 400; text-align: center; line-height: 16px; }
.tray { margin-left: auto; display: flex; align-items: center; }
.t1 { width: 14px; height: 8px; }
.t2 { width: 18px; height: 18px; margin-left: 8px; }
.t3 { width: 18px; height: 14px; margin-left: 10px; }
.t4 { width: 18px; height: 14px; margin-left: 6px; }
.t5 { width: 18px; height: 12px; margin-left: 7px; }
.clock { width: 67px; display: flex; flex-direction: column; align-items: flex-end; font-size: 12px; line-height: 16px; letter-spacing: -.42px; }
.count { width: 16px; height: 16px; margin: 0 20px 0 7px; border-radius: 8px; background: #4cc2ff; color: #111; font-size: 11px; line-height: 16px; text-align: center; }
```
